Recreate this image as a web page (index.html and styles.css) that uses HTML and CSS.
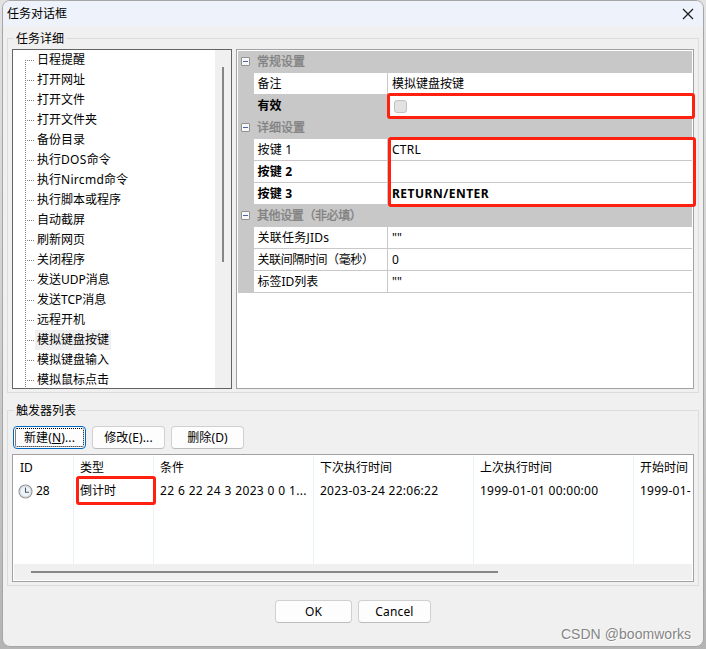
FILE: index.html
```
<!DOCTYPE html>
<html lang="zh-CN">
<head>
<meta charset="utf-8">
<title>任务对话框</title>
<link rel="stylesheet" href="styles.css">
</head>
<body>
<main class="window">
  <header class="titlebar"><span>任务对话框</span>
    <svg class="close" width="12" height="12" viewBox="0 0 12 12"><path d="M1 1 11 11M11 1 1 11" fill="none" stroke="#1a1a1a" stroke-width="1.2"/></svg>
  </header>
  <section class="group details">
    <h2 class="legend">任务详细</h2>
    <div class="tree">
      <ul class="nodes">
        <li><span>日程提醒</span></li><li><span>打开网址</span></li><li><span>打开文件</span></li><li><span>打开文件夹</span></li><li><span>备份目录</span></li><li><span>执行<em>DOS</em>命令</span></li><li><span>执行<em>Nircmd</em>命令</span></li><li><span>执行脚本或程序</span></li><li><span>自动截屏</span></li><li><span>刷新网页</span></li><li><span>关闭程序</span></li><li><span>发送UDP消息</span></li><li><span>发送TCP消息</span></li><li><span>远程开机</span></li><li><span class="selected">模拟键盘按键</span></li><li><span>模拟键盘输入</span></li><li><span>模拟鼠标点击</span></li>
      </ul>
      <div class="vscroll"><div class="vthumb"></div></div>
    </div>
    <div class="props">
      <div class="cat"><i class="toggle"></i>常规设置</div>
      <div class="prop"><span class="name">备注</span><span class="value">模拟键盘按键</span></div>
      <div class="prop modified active"><span class="name">有效</span><span class="value"><i class="check"></i></span></div>
      <div class="cat"><i class="toggle"></i>详细设置</div>
      <div class="prop"><span class="name latin">按键 1</span><span class="value latin">CTRL</span></div>
      <div class="prop modified"><span class="name latin">按键 2</span><span class="value"></span></div>
      <div class="prop modified"><span class="name latin">按键 3</span><span class="value upper">RETURN/ENTER</span></div>
      <div class="cat"><i class="toggle"></i><span class="tight">其他设置（非必填）</span></div>
      <div class="prop"><span class="name latin">关联任务JIDs</span><span class="value">""</span></div>
      <div class="prop"><span class="name tight">关联间隔时间（毫秒）</span><span class="value">0</span></div>
      <div class="prop"><span class="name">标签ID列表</span><span class="value">""</span></div>
      <div class="mark mark-valid"></div>
      <div class="mark mark-keys"></div>
    </div>
  </section>
  <section class="group triggers">
    <h2 class="legend">触发器列表</h2>
    <div class="toolbar">
      <button class="btn focused">新建(<u>N</u>)...</button><button class="btn">修改(E)...</button><button class="btn">删除(D)</button>
    </div>
    <div class="list">
      <div class="columns">
        <div class="col"><b>ID</b><span class="id"><svg width="15" height="15" viewBox="0 0 15 15"><circle cx="7.5" cy="7.5" r="6.5" fill="#eef5fa" stroke="#909090" stroke-width="1.1"/><circle cx="7.5" cy="7.5" r="5.3" fill="none" stroke="#c9d3da" stroke-width=".8"/><path d="M7.5 3.5V8.2H11" fill="none" stroke="#485a6b" stroke-width="1.1"/></svg>28</span></div>
        <div class="col"><b>类型</b><span>倒计时</span></div>
        <div class="col wide"><b>条件</b><span class="condition">22 6 22 24 3 2023 0 0 1...</span></div>
        <div class="col wide"><b>下次执行时间</b><span class="date">2023-03-24 22:06:22</span></div>
        <div class="col wide"><b>上次执行时间</b><span class="date">1999-01-01 00:00:00</span></div>
        <div class="col last"><b>开始时间</b><span class="date">1999-01-</span></div>
      </div>
      <div class="hscroll"><div class="hthumb"></div></div>
      <div class="mark mark-type"></div>
    </div>
  </section>
  <footer class="actions"><button class="btn ok">OK</button><button class="btn">Cancel</button></footer>
  <div class="watermark">CSDN @boomworks</div>
</main>
</body>
</html>
```
FILE: styles.css
```
* { box-sizing: border-box; }
body {
  margin: 0;
  width: 706px;
  height: 649px;
  overflow: hidden;
  padding-left: 2px;
  background: linear-gradient(#e2e2e2, #d0d0d0 50%, #b4b4b4);
  font: 12px/20px "Noto Sans", "Noto Sans CJK SC", sans-serif;
  color: #000;
}
.window {
  position: relative;
  width: 702px;
  height: 647px;
  border: 1px solid #a6a6a6;
  border-radius: 8px;
  background: #f0f0f0;
  overflow: hidden;
}
.titlebar {
  display: flex;
  justify-content: space-between;
  align-items: center;
  height: 25px;
  padding: 0 9px 0 4px;
  background: #eef3fb;
}
.group {
  position: relative;
  margin-left: 4px;
  width: 692px;
  border: 1px solid #dcdcdc;
}
.legend {
  position: absolute;
  top: -10px;
  left: 6px;
  margin: 0;
  padding: 0 2px;
  background: #f0f0f0;
  font-size: 12px;
  font-weight: 400;
}
.details {
  display: flex;
  gap: 4px;
  height: 355px;
  margin-top: 12px;
  padding: 10px 4px 3px;
}
.tree {
  display: flex;
  justify-content: space-between;
  width: 220px;
  height: 340px;
  border: 1px solid #646464;
  background: #fff;
  overflow: hidden;
}
.nodes {
  margin: 0 0 0 12px;
  padding: 0;
  list-style: none;
  white-space: nowrap;
}
.nodes li {
  display: flex;
  align-items: center;
  height: 20px;
  background: repeating-linear-gradient(#808080 0 1px, transparent 1px 2px) 0 0 / 1px 100% no-repeat;
}
.nodes li:first-child { background-position: 0 10px; }
.nodes li::before {
  content: "";
  width: 9px;
  height: 1px;
  background: repeating-linear-gradient(90deg, #808080 0 1px, transparent 1px 2px);
}
.nodes span { margin-left: 1px; padding: 0 2px; }
.nodes em { font-style: normal; letter-spacing: .3px; }
.nodes .selected { background: #f0f0f0; }
.vscroll {
  width: 16px;
  padding: 17px 0 0 7px;
  background: #f0f0f0;
}
.vthumb { width: 2px; height: 195px; background: #868686; }
.props {
  position: relative;
  width: 458px;
  height: 340px;
  padding: 1px;
  border: 1px solid #a0a0a5;
  background: #fff;
}
.cat {
  display: flex;
  align-items: center;
  height: 22px;
  padding-left: 3px;
  background: #c8c8c8;
  color: #808080;
  -webkit-text-stroke: .3px #808080;
}
.toggle {
  display: grid;
  place-items: center;
  width: 9px;
  height: 9px;
  margin: 0 7px 2px 0;
  border: 1px solid #919191;
  border-radius: 1px;
  background: #f7f7f7;
}
.toggle::before { content: ""; width: 5px; height: 1px; background: #4b63a7; }
.prop {
  display: flex;
  height: 22px;
  padding-left: 16px;
  background: #c8c8c8;
}
.name, .value {
  display: flex;
  align-items: center;
  height: 21px;
  background: #fff;
  white-space: pre;
}
.name { width: 133px; padding-left: 3.5px; margin-right: 1px; }
.value { flex: 1; padding-left: 4px; }
.latin { letter-spacing: .25px; }
.upper { letter-spacing: .5px; }
.tight { letter-spacing: -.4px; }
.modified { font-weight: 700; }
.active .name { background: #c8c8c8; }
.check {
  width: 13px;
  height: 13px;
  margin: 1px 0 0 2px;
  border: 1px solid #c2c2c2;
  border-radius: 3px;
  background: #e2e2e2;
}
.mark { position: absolute; border: 3px solid #ff2010; border-radius: 3px; }
.mark-valid { left: 150px; top: 43px; width: 308px; height: 26px; }
.mark-keys { left: 151px; top: 87px; width: 308px; height: 70px; }
.triggers {
  height: 176px;
  margin-top: 17px;
  padding: 15px 4px 0;
}
.toolbar { display: flex; gap: 6px; padding-left: 1px; }
.btn {
  width: 73px;
  height: 23px;
  padding: 0;
  border: 1px solid #d0d0d0;
  border-bottom-color: #bcbcbc;
  border-radius: 4px;
  background: #fdfdfd;
  color: #000;
  font: inherit;
  letter-spacing: .15px;
}
.focused {
  border: 1px solid #0067c0;
  outline: 1px dotted #000;
  outline-offset: -3px;
}
.list {
  position: relative;
  width: 682px;
  height: 128px;
  margin-top: 5px;
  padding: 1px;
  border: 1px solid #a0a0a5;
  background: #fff;
}
.columns { display: flex; height: 108px; overflow: hidden; }
.col {
  display: flex;
  flex: none;
  flex-direction: column;
  width: 80px;
  padding-left: 6px;
  border-right: 1px solid #eaf2f9;
  white-space: nowrap;
}
.col:first-child { width: 60px; }
.col.wide { width: 160px; }
.col.last { width: 58px; border: 0; overflow: hidden; }
.col b { height: 24px; line-height: 24px; font-weight: 400; }
.col span { height: 22px; line-height: 22px; }
.col .condition { letter-spacing: .36px; }
.col .date { letter-spacing: .26px; }
.id { display: flex; align-items: center; gap: 3px; margin-left: -2px; }
.hscroll { height: 16px; padding: 7px 0 0 17px; background: #f0f0f0; }
.hthumb { width: 467px; height: 2px; background: #868686; }
.mark-type { left: 63px; top: 21px; width: 80px; height: 29px; }
.actions { display: flex; justify-content: center; gap: 6px; margin-top: 14px; }
.ok { width: 77px; }
.watermark {
  position: absolute;
  right: 12px;
  bottom: 2px;
  color: #868686;
  font: 14px/20px "Liberation Sans", sans-serif;
  letter-spacing: .05px;
  text-shadow: 1px 1px 0 #fff;
}
```
